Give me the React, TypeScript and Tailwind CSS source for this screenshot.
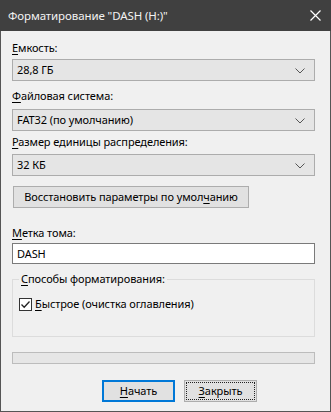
import React from "react";

const font = { fontFamily: '"Noto Sans", "Segoe UI", Arial, sans-serif' };

function Chevron() {
  return (
    <svg width="10" height="6" viewBox="0 0 10 6" className="absolute right-[9px] top-[8px]">
      <path d="M0.5 0.5 L5 5 L9.5 0.5" fill="none" stroke="#555" strokeWidth="1" />
    </svg>
  );
}

function Select({ value }: { value: string }) {
  return (
    <div className="relative h-[22px] w-[303px] border border-[#acacac] bg-[#e5e5e5] pl-[4px] leading-[20px] text-black">
      {value}
      <Chevron />
    </div>
  );
}

function U({ children }: { children: React.ReactNode }) {
  return <span className="underline decoration-1 underline-offset-[2px]">{children}</span>;
}

export default function App() {
  return (
    <div style={font} className="w-[331px] h-[412px] bg-[#f0f0f0] border border-[#555] border-t-0 flex flex-col text-[11px] tracking-[-0.1px] text-black">
      <div className="h-[31px] bg-[#404040] flex items-center justify-between pl-[8px] pr-[10px] -mx-px">
        <span className="text-[#f2f2f2] text-[11.5px]">Форматирование "DASH (H:)"</span>
        <svg width="11" height="11" viewBox="0 0 11 11">
          <path d="M0.5 0.5 L10.5 10.5 M10.5 0.5 L0.5 10.5" stroke="#fff" strokeWidth="1.2" />
        </svg>
      </div>
      <div className="pl-[11px] flex flex-col">
        <div className="mt-[9px] h-[16px] leading-[16px]"><U>Е</U>мкость:</div>
        <div className="mt-[3px]"><Select value="28,8 ГБ" /></div>
        <div className="mt-[7px] h-[16px] leading-[16px]"><U>Ф</U>айловая система:</div>
        <div className="mt-[5px]"><Select value="FAT32 (по умолчанию)" /></div>
        <div className="mt-[3px] h-[16px] leading-[16px]"><U>Р</U>азмер единицы распределения:</div>
        <div className="mt-[4px]"><Select value="32 КБ" /></div>
        <div className="mt-[10px] ml-[1px] h-[22px] w-[236px] border border-[#adadad] bg-[#e1e1e1] flex items-center justify-center leading-[20px]">
          <span className="whitespace-nowrap">Восстановить параметры по умол<U>ч</U>анию</span>
        </div>
        <div className="mt-[17px] h-[16px] leading-[16px]"><U>М</U>етка тома:</div>
        <div className="mt-[2px] h-[21px] w-[303px] border border-[#7a7a7a] bg-white pl-[4px] leading-[19px]">DASH</div>
        <div className="mt-[15px] relative h-[58px] w-[303px] border border-[#dcdcdc]">
          <div className="absolute left-[6px] -top-[9px] bg-[#f0f0f0] px-[2px] leading-[16px]"><U>С</U>пособы форматирования:</div>
          <div className="absolute left-[6px] top-[16px] flex items-center gap-[3px]">
            <div className="w-[13px] h-[13px] border border-[#333] bg-white flex items-center justify-center">
              <svg width="11" height="11" viewBox="0 0 11 11">
                <path d="M1.5 5.5 L4.2 8.3 L9.5 2.5" fill="none" stroke="#222" strokeWidth="1.3" />
              </svg>
            </div>
            <span className="leading-[16px]"><U>Б</U>ыстрое (очистка оглавления)</span>
          </div>
        </div>
        <div className="mt-[15px] h-[12px] w-[303px] border border-[#bcbcbc] bg-[#e6e6e6]" />
        <div className="mt-[16px] flex gap-[9px] pl-[90px]">
          <div className="h-[22px] w-[73px] border-2 border-[#0078d7] bg-[#e1e1e1] flex items-center justify-center leading-[18px]">
            <span><U>Н</U>ачать</span>
          </div>
          <div className="h-[22px] w-[73px] border border-[#adadad] bg-[#e1e1e1] p-[1px]">
            <div className="h-full w-full border border-dotted border-[#222] flex items-center justify-center leading-[16px]">
              <span><U>З</U>акрыть</span>
            </div>
          </div>
        </div>
      </div>
    </div>
  );
}
